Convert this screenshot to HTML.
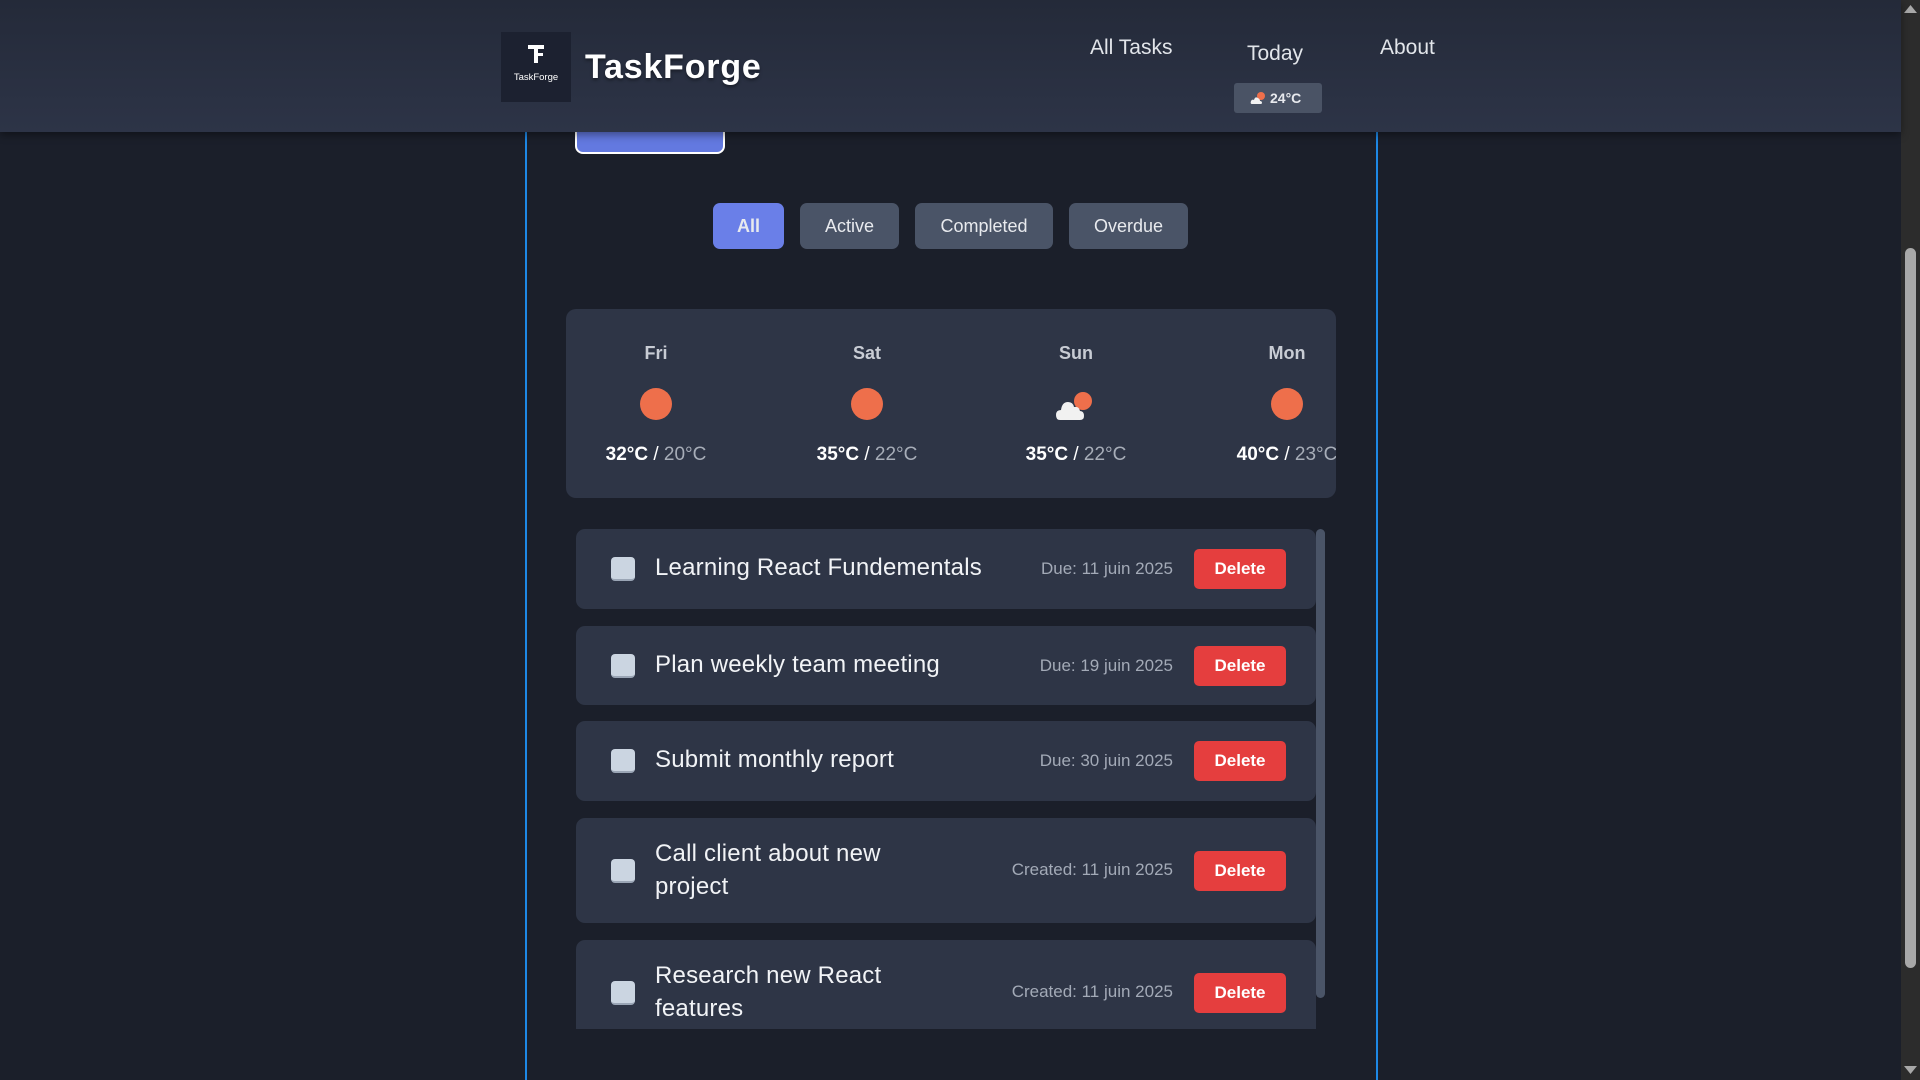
<!DOCTYPE html>
<html><head><meta charset="utf-8"><style>
*{box-sizing:border-box;margin:0;padding:0}
body{width:1920px;height:1080px;overflow:hidden;background:#1b1f2a;font-family:"Liberation Sans",sans-serif;position:relative;color:#fff}
.abs{position:absolute}
header{position:absolute;left:0;top:0;width:1901px;height:132px;background:linear-gradient(180deg,#242a39,#2d3447);box-shadow:0 3px 8px rgba(0,0,0,.4);z-index:5}
.logo{left:501px;top:32px;width:70px;height:70px;background:#1c2130}
.logo .s{position:absolute;left:0;width:70px;top:40px;text-align:center;font-size:9.5px}
.title{left:585px;top:48px;font-size:34px;font-weight:bold;letter-spacing:.8px;text-shadow:0 2px 3px rgba(0,0,0,.4)}
.nav{font-size:21px;color:#e2e5ea}
.badge{left:1234px;top:83px;width:88px;height:30px;background:#4a5365;border-radius:3px;font-size:14px;font-weight:bold;color:#e8eaee;line-height:30px;padding-left:36px}
.vl{top:0;width:2px;height:1080px;background:#1e88e5}
.filt{top:203px;height:46px;border-radius:7px;background:#4a5467;font-size:18px;color:#e8eaee;text-align:center;line-height:46px}
.wx{left:566px;top:309px;width:770px;height:189px;background:#2e3546;border-radius:10px;overflow:hidden}
.day{position:absolute;width:160px;text-align:center}
.dn{top:34px;font-size:18px;font-weight:bold;color:#c8ccd4}
.tp{top:135px;font-size:19px;color:#fff}
.tp b{font-weight:bold}.tp span{color:#a7adb8}
.sun{position:absolute;top:79px;width:32px;height:32px;border-radius:50%;background:#ee6f4b}
.item{left:576px;width:740px;background:#2e3546;border-radius:9px}
.cb{position:absolute;left:35px;width:24px;height:24px;border-radius:4px;background:#cbd5e1;border-bottom:2px solid #9aa5b5}
.tx{position:absolute;left:79px;font-size:24px;color:#f1f3f6;line-height:33px;letter-spacing:.2px}
.dt{position:absolute;right:143px;font-size:17px;color:#a3aab7}
.del{position:absolute;left:618px;width:92px;height:40px;background:#e53e3e;border-radius:5px;font-size:17px;font-weight:bold;text-align:center;line-height:40px}
</style></head><body>
<header>
<div class="abs logo"><svg class="abs" style="left:27px;top:13px" width="16" height="18" viewBox="0 0 16 18"><rect x="0" y="0" width="16" height="4" fill="#fff"/><rect x="6" y="0" width="4" height="18" fill="#fff"/><rect x="8" y="8" width="7" height="3" fill="#fff"/></svg><div class="s">TaskForge</div></div>
<div class="abs title">TaskForge</div>
<div class="abs nav" style="left:1090px;top:36px">All Tasks</div>
<div class="abs nav" style="left:1247px;top:42px">Today</div>
<div class="abs nav" style="left:1380px;top:36px">About</div>
<div class="abs badge"><svg class="abs" style="left:16px;top:8px" width="16" height="14" viewBox="0 0 16 14"><circle cx="11" cy="5" r="4" fill="#ee6f4b"/><path d="M2 13 Q0 13 1 10 Q2 8 4 9 Q5 5 8 7 Q10 8 10 10 Q12 10 12 12 Q12 13 10 13Z" fill="#f2f2f2"/></svg>24°C</div>
</header>
<div class="abs vl" style="left:525px"></div>
<div class="abs vl" style="left:1376px"></div>
<div class="abs" style="left:575px;top:110px;width:150px;height:44px;background:#6379e0;border-radius:8px;border:2px solid #fff;border-top:none"></div>
<div class="abs filt" style="left:713px;width:71px;background:#6a7fe8;font-weight:bold">All</div>
<div class="abs filt" style="left:800px;width:99px">Active</div>
<div class="abs filt" style="left:915px;width:138px">Completed</div>
<div class="abs filt" style="left:1069px;width:119px">Overdue</div>
<div class="abs wx">
<div class="day dn" style="left:10px">Fri</div><div class="sun" style="left:74px"></div><div class="day tp" style="left:10px"><b>32°C</b> / <span>20°C</span></div>
<div class="day dn" style="left:221px">Sat</div><div class="sun" style="left:285px"></div><div class="day tp" style="left:221px"><b>35°C</b> / <span>22°C</span></div>
<div class="day dn" style="left:430px">Sun</div>
<svg class="abs" style="left:490px;top:81px" width="36" height="32" viewBox="0 0 36 32"><circle cx="27" cy="11" r="9" fill="#ee6f4b"/><path d="M4 30 Q0 30 0 25 Q0 20 5 20 Q6 12 12 12 Q17 12 18 17 Q23 16 24 21 Q28 21 28 26 Q28 30 24 30Z" fill="#f1f1f1"/></svg>
<div class="day tp" style="left:430px"><b>35°C</b> / <span>22°C</span></div>
<div class="day dn" style="left:641px">Mon</div><div class="sun" style="left:705px"></div><div class="day tp" style="left:641px"><b>40°C</b> / <span>23°C</span></div>
</div>
<div class="abs" style="left:576px;top:529px;width:750px;height:500px;overflow:hidden">
<div class="abs item" style="left:0;top:0;height:80px"><div class="cb" style="top:28px"></div><div class="tx" style="top:22px">Learning React Fundementals</div><div class="dt" style="top:30px">Due: 11 juin 2025</div><div class="del" style="top:20px">Delete</div></div>
<div class="abs item" style="left:0;top:97px;height:79px"><div class="cb" style="top:28px"></div><div class="tx" style="top:22px">Plan weekly team meeting</div><div class="dt" style="top:30px">Due: 19 juin 2025</div><div class="del" style="top:20px">Delete</div></div>
<div class="abs item" style="left:0;top:192px;height:80px"><div class="cb" style="top:28px"></div><div class="tx" style="top:22px">Submit monthly report</div><div class="dt" style="top:30px">Due: 30 juin 2025</div><div class="del" style="top:20px">Delete</div></div>
<div class="abs item" style="left:0;top:289px;height:105px"><div class="cb" style="top:41px"></div><div class="tx" style="top:19px">Call client about new<br>project</div><div class="dt" style="top:42px">Created: 11 juin 2025</div><div class="del" style="top:33px">Delete</div></div>
<div class="abs item" style="left:0;top:411px;height:120px;border-radius:9px 9px 0 0"><div class="cb" style="top:41px"></div><div class="tx" style="top:19px">Research new React<br>features</div><div class="dt" style="top:42px">Created: 11 juin 2025</div><div class="del" style="top:33px">Delete</div></div>
<div class="abs" style="left:740px;top:0;width:9px;height:469px;background:#4a5467;border-radius:5px"></div>
</div>
<div class="abs" style="left:1901px;top:0;width:19px;height:1080px;background:#2c2c2c"></div>
<div class="abs" style="left:1905px;top:248px;width:11px;height:720px;background:#a8a8a8;border-radius:6px"></div>
<svg class="abs" style="left:1904px;top:4px" width="13" height="9"><path d="M0 9 L6.5 1 L13 9Z" fill="#a8a8a8"/></svg>
<svg class="abs" style="left:1904px;top:1066px" width="13" height="9"><path d="M0 0 L6.5 8 L13 0Z" fill="#a8a8a8"/></svg>
</body></html>
